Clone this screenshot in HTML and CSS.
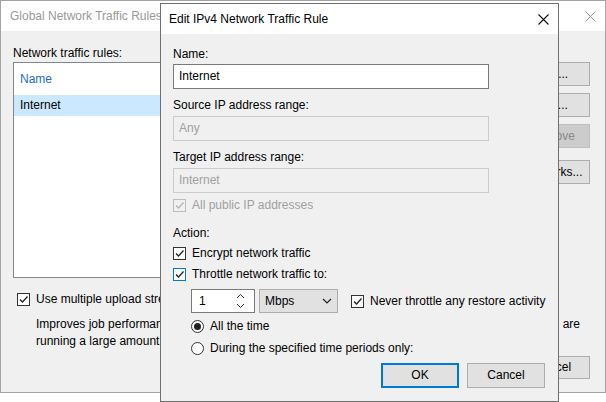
FILE: index.html
```html
<!DOCTYPE html>
<html>
<head>
<meta charset="utf-8">
<link rel="stylesheet" href="styles.css">
</head>
<body>
<div class="desk">
  <div class="win outer">
    <div class="titlebar">
      <span class="title inactive">Global Network Traffic Rules</span>
      <svg class="close" width="11" height="11" viewBox="0 0 11 11"><path d="M0.5 0.5 L10.5 10.5 M10.5 0.5 L0.5 10.5" stroke="#9a9a9a" stroke-width="1" fill="none"/></svg>
    </div>
    <div class="outer-body">
      <div class="top-row">
        <div class="left-col">
          <div class="label">Network traffic rules:</div>
          <div class="listbox">
            <div class="list-head">Name</div>
            <div class="list-row selected">Internet</div>
          </div>
        </div>
        <div class="right-col">
          <div class="btn">Add...</div>
          <div class="btn">Edit...</div>
          <div class="btn disabled">Remove</div>
          <div class="btn wide-gap">Networks...</div>
        </div>
      </div>
      <div class="check-row outer-check">
        <span class="cb"><svg width="11" height="11" viewBox="0 0 11 11"><path d="M2 5.5 L4.5 8 L9.5 2.5" stroke="#222" stroke-width="1.3" fill="none"/></svg></span>
        <span class="clip">Use multiple upload streams per job</span>
      </div>
      <div class="desc">
        <div class="desc-line"><span class="clip">Improves job performance over high-latency links when you</span><span>are</span></div>
        <div class="desc-line"><span class="clip">running a large amount of concurrent jobs.</span></div>
      </div>
      <div class="outer-foot">
        <div class="btn">Cancel</div>
      </div>
    </div>
  </div>

  <div class="win inner">
    <div class="titlebar inner-title">
      <span class="title">Edit IPv4 Network Traffic Rule</span>
      <svg class="close" width="11" height="11" viewBox="0 0 11 11"><path d="M0.5 0.5 L10.5 10.5 M10.5 0.5 L0.5 10.5" stroke="#111" stroke-width="1.1" fill="none"/></svg>
    </div>
    <div class="inner-body">
      <div class="label">Name:</div>
      <div class="input">Internet</div>
      <div class="label mt8">Source IP address range:</div>
      <div class="input dis">Any</div>
      <div class="label mt8">Target IP address range:</div>
      <div class="input dis">Internet</div>
      <div class="check-row r-public dis-text">
        <span class="cb cb-dis"><svg width="11" height="11" viewBox="0 0 11 11"><path d="M2 5.5 L4.5 8 L9.5 2.5" stroke="#b5b5b5" stroke-width="1.3" fill="none"/></svg></span>
        <span>All public IP addresses</span>
      </div>
      <div class="label r-action">Action:</div>
      <div class="check-row r-encrypt">
        <span class="cb"><svg width="11" height="11" viewBox="0 0 11 11"><path d="M2 5.5 L4.5 8 L9.5 2.5" stroke="#222" stroke-width="1.3" fill="none"/></svg></span>
        <span>Encrypt network traffic</span>
      </div>
      <div class="check-row r-throttle">
        <span class="cb cb-focus"><svg width="11" height="11" viewBox="0 0 11 11"><path d="M2 5.5 L4.5 8 L9.5 2.5" stroke="#222" stroke-width="1.3" fill="none"/></svg></span>
        <span>Throttle network traffic to:</span>
      </div>
      <div class="spin-row">
        <div class="spinner">
          <span>1</span>
          <svg class="arrows" width="9" height="16" viewBox="0 0 9 16"><path d="M1 5 L4.5 1.5 L8 5 M1 11 L4.5 14.5 L8 11" stroke="#333" stroke-width="1" fill="none"/></svg>
        </div>
        <div class="combo">
          <span>Mbps</span>
          <svg width="10" height="6" viewBox="0 0 10 6"><path d="M1 1 L5 5 L9 1" stroke="#222" stroke-width="1.2" fill="none"/></svg>
        </div>
        <div class="check-row never">
          <span class="cb"><svg width="11" height="11" viewBox="0 0 11 11"><path d="M2 5.5 L4.5 8 L9.5 2.5" stroke="#222" stroke-width="1.3" fill="none"/></svg></span>
          <span>Never throttle any restore activity</span>
        </div>
      </div>
      <div class="radio-row r-radio1">
        <span class="rb on"></span>
        <span>All the time</span>
      </div>
      <div class="radio-row r-radio2">
        <span class="rb"></span>
        <span>During the specified time periods only:</span>
      </div>
      <div class="inner-foot">
        <div class="btn ok">OK</div>
        <div class="btn wide">Cancel</div>
      </div>
    </div>
  </div>
</div>
</body>
</html>
```
FILE: styles.css
```css
* { box-sizing: border-box; }
html, body { margin: 0; padding: 0; background: #ffffff; }
body {
  font-family: "Liberation Sans", Arial, sans-serif;
  font-size: 12px;
  color: #000;
}
.desk { position: relative; width: 606px; height: 402px; overflow: hidden; }

.win { background: #f0f0f0; }
.outer {
  width: 606px;
  height: 393px;
  border: 1px solid #a3a3a3;
  display: flex;
  flex-direction: column;
}
.titlebar {
  background: #fff;
  height: 30px;
  display: flex;
  align-items: center;
  justify-content: space-between;
  padding: 0 9px 0 9px;
  flex: none;
}
.title { font-size: 12px; line-height: 16px; }
.title.inactive { color: #999999; }
.close { display: block; }

.outer-body {
  padding: 14px 15px 0 12px;
  flex: 1;
  display: flex;
  flex-direction: column;
}
.label { line-height: 16px; height: 16px; white-space: nowrap; }
.top-row { display: flex; gap: 11px; }
.left-col { flex: 1; }
.listbox {
  margin-top: 1px;
  height: 216px;
  background: #fff;
  border: 1px solid #828790;
}
.list-head {
  color: #1a6fc4;
  height: 32px;
  line-height: 32px;
  padding-left: 6px;
}
.list-row {
  height: 21px;
  line-height: 21px;
  padding-left: 6px;
}
.list-row.selected { background: #cce8ff; }
.right-col {
  width: 75px;
  padding-top: 17px;
  display: flex;
  flex-direction: column;
  gap: 7px;
}
.btn {
  height: 24px;
  line-height: 22px;
  text-align: center;
  background: #e1e1e1;
  border: 1px solid #adadad;
  white-space: nowrap;
}
.btn.disabled { background: #cccccc; border-color: #bfbfbf; color: #8a8a8a; }
.btn.wide-gap { margin-top: 5px; }

.check-row {
  display: flex;
  align-items: center;
  gap: 6px;
  height: 16px;
  line-height: 16px;
  white-space: nowrap;
}
.cb {
  width: 13px;
  height: 13px;
  border: 1px solid #333333;
  background: #fff;
  display: flex;
  align-items: center;
  justify-content: center;
  flex: none;
}
.cb svg { display: block; }
.cb-dis { border-color: #bcbcbc; background: #f0f0f0; }
.cb-focus { border-color: #0078d7; }
.dis-text { color: #a0a0a0; }

.clip { display: block; overflow: hidden; white-space: nowrap; }
.outer-check { margin-top: 13px; padding-left: 4px; gap: 6px; }
.outer-check .clip { width: 124px; }
.desc { margin-top: 9px; padding-left: 23px; line-height: 17px; }
.desc-line { display: flex; justify-content: space-between; white-space: nowrap; padding-right: 10px; }
.desc-line .clip { width: 124px; }
.outer-foot { display: flex; justify-content: flex-end; margin-top: 6px; }
.outer-foot .btn { width: 75px; height: 23px; line-height: 21px; }

.inner {
  position: absolute;
  left: 160px;
  top: 3px;
  width: 399px;
  height: 399px;
  border: 1px solid #6f6f6f;
  display: flex;
  flex-direction: column;
}
.inner-title { height: 30px; padding: 0 9px 0 8px; }
.inner-body {
  padding: 12px 12px 0 12px;
  display: flex;
  flex-direction: column;
}
.input {
  margin-top: 2px;
  width: 316px;
  height: 25px;
  line-height: 23px;
  background: #fff;
  border: 1px solid #7a7a7a;
  padding-left: 5px;
}
.input.dis { background: #f0f0f0; border-color: #cccccc; color: #a0a0a0; margin-top: 3px; }
.mt8 { margin-top: 8px; }
.r-public { margin-top: 4px; }
.r-action { margin-top: 12px; }
.r-encrypt { margin-top: 4px; }
.r-throttle { margin-top: 5px; }
.spin-row {
  margin-top: 7px;
  padding-left: 18px;
  display: flex;
  align-items: center;
  height: 24px;
}
.spinner {
  width: 64px;
  height: 24px;
  background: #fff;
  border: 1px solid #7a7a7a;
  display: flex;
  align-items: center;
  justify-content: space-between;
  padding: 0 9px 0 7px;
}
.arrows { display: block; }
.combo {
  margin-left: 4px;
  width: 79px;
  height: 24px;
  background: #e1e1e1;
  border: 1px solid #adadad;
  display: flex;
  align-items: center;
  justify-content: space-between;
  padding: 0 5px 0 5px;
}
.combo svg { display: block; }
.never { margin-left: 13px; }
.radio-row {
  display: flex;
  align-items: center;
  gap: 6px;
  height: 16px;
  line-height: 16px;
  padding-left: 18px;
  white-space: nowrap;
}
.r-radio1 { margin-top: 5px; }
.r-radio2 { margin-top: 6px; }
.rb {
  width: 13px;
  height: 13px;
  border: 1px solid #333;
  border-radius: 50%;
  background: #fff;
  display: flex;
  align-items: center;
  justify-content: center;
  flex: none;
}
.rb.on::after {
  content: "";
  width: 7px;
  height: 7px;
  border-radius: 50%;
  background: #222;
}
.inner-foot {
  margin-top: 7px;
  display: flex;
  justify-content: flex-end;
  gap: 8px;
  padding-right: 1px;
}
.inner-foot .btn { width: 78px; height: 25px; line-height: 23px; }
.btn.ok { border: 2px solid #0078d7; line-height: 21px; }
```
